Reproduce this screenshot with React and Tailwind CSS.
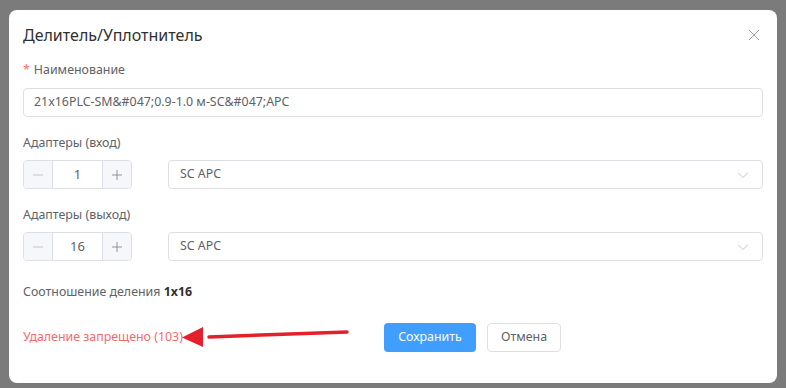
import React from 'react';

function Stepper({ value }) {
  return (
    <div className="flex h-[29px] w-[109px] border border-[#dcdfe6] rounded-[4px] overflow-hidden">
      <div className="w-[29px] flex items-center justify-center bg-[#f5f7fa] border-r border-[#dcdfe6] text-[#c0c4cc]">
        <svg width="12" height="12" viewBox="0 0 12 12"><path d="M1 6h10" stroke="currentColor" strokeWidth="1" /></svg>
      </div>
      <div className="flex-1 flex items-center justify-center text-[13px] text-[#606266]">{value}</div>
      <div className="w-[29px] flex items-center justify-center bg-[#f5f7fa] border-l border-[#dcdfe6] text-[#909399]">
        <svg width="12" height="12" viewBox="0 0 12 12"><path d="M1 6h10M6 1v10" stroke="currentColor" strokeWidth="1" /></svg>
      </div>
    </div>
  );
}

function Select({ value }) {
  return (
    <div className="flex-1 h-[29px] border border-[#dcdfe6] rounded-[4px] flex items-center justify-between pl-[11px] pr-[13px] text-[12.4px] text-[#606266]">
      <span>{value}</span>
      <svg width="12" height="8" viewBox="0 0 12 8" className="text-[#c0c4cc]"><path d="M1 1.5l5 5 5-5" fill="none" stroke="currentColor" strokeWidth="1" /></svg>
    </div>
  );
}

export default function App() {
  return (
    <div className="w-[786px] h-[388px] bg-[#7b7b7b] pt-[10px] pl-[9px] overflow-hidden" style={{ fontFamily: '"Noto Sans", "Open Sans", sans-serif' }}>
      <div className="relative w-[768px] h-[373px] bg-white rounded-[8px] pl-[14px] pr-[14px]">
        <div className="flex items-start justify-between pt-[14px]">
          <h2 className="text-[16px] leading-[22px] text-[#303133]">Делитель/Уплотнитель</h2>
          <svg width="12" height="12" viewBox="0 0 12 12" className="mt-[5px] mr-[3px] text-[#a0a3a9]"><path d="M1 1l10 10M11 1L1 11" stroke="currentColor" strokeWidth="1" /></svg>
        </div>

        <div className="mt-[15px] text-[12.4px] leading-[18px] text-[#606266]">
          <span className="text-[#f56c6c] mr-[4px]">*</span>Наименование
        </div>
        <div className="mt-[9px] h-[29px] border border-[#dcdfe6] rounded-[4px] flex items-center px-[10px] text-[12.4px] text-[#606266]">
          21x16PLC-SM&amp;#047;0.9-1.0 м-SC&amp;#047;APC
        </div>

        <div className="mt-[17px] text-[12.4px] leading-[18px] text-[#606266]">Адаптеры (вход)</div>
        <div className="mt-[8px] flex gap-[36px]">
          <Stepper value="1" />
          <Select value="SC APC" />
        </div>

        <div className="mt-[17px] text-[12.4px] leading-[18px] text-[#606266]">Адаптеры (выход)</div>
        <div className="mt-[8px] flex gap-[36px]">
          <Stepper value="16" />
          <Select value="SC APC" />
        </div>

        <div className="mt-[22px] text-[12.4px] leading-[18px] text-[#606266]">
          Соотношение деления <b className="font-bold text-[#303133]">1x16</b>
        </div>

        <div className="mt-[22px] flex items-center">
          <div className="w-[361px] text-[12.4px] text-[#f26b6b]">Удаление запрещено (103)</div>
          <button className="h-[29px] w-[92px] rounded-[4px] bg-[#409eff] text-white text-[12.4px]">Сохранить</button>
          <button className="ml-[11px] h-[29px] w-[74px] rounded-[4px] border border-[#dcdfe6] bg-white text-[#606266] text-[12.4px]">Отмена</button>
        </div>

        <svg className="absolute left-[170px] top-[311px]" width="172" height="28" viewBox="0 0 172 28">
          <path d="M168 11 L30 16" stroke="#e3202b" strokeWidth="3.5" strokeLinecap="round" fill="none" />
          <path d="M3 16.5 L24 6 L24 26 Z" fill="#e3202b" />
        </svg>
      </div>
    </div>
  );
}
